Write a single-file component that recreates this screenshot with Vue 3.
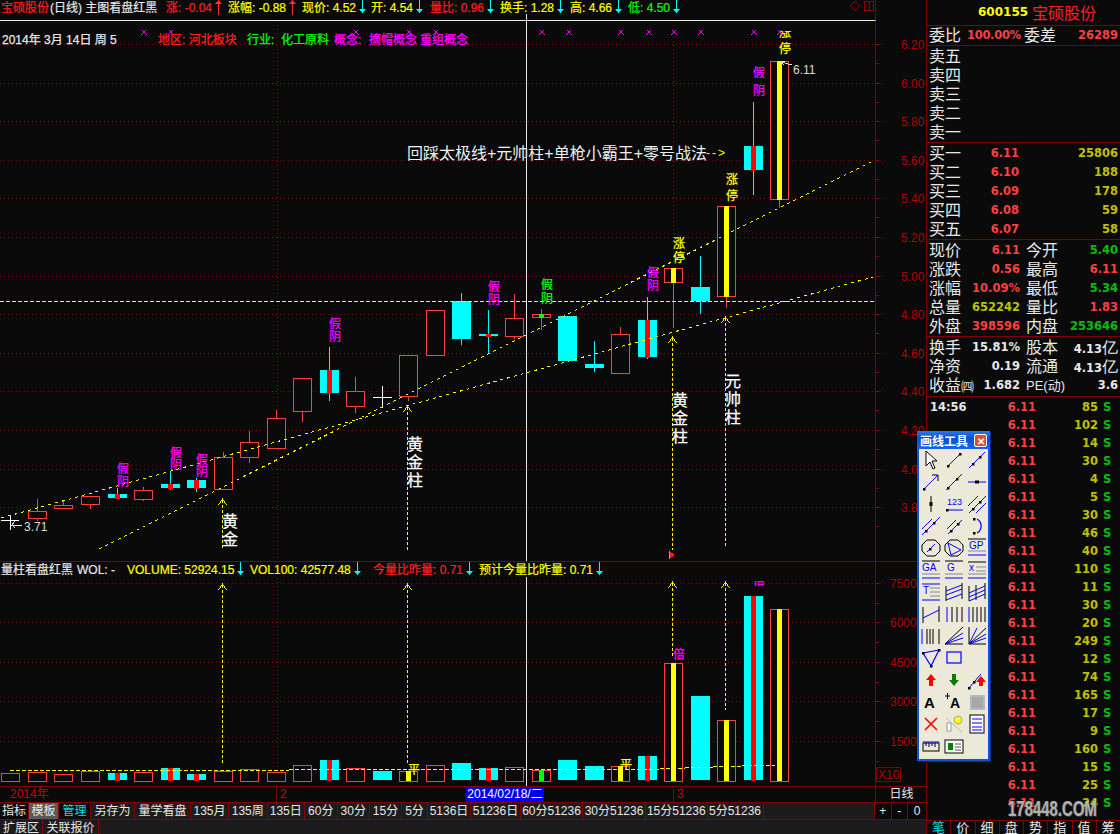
<script setup>
const quotes = [
  { text: '宝硕股份', color: 'red', w: 50 },
  { text: '(日线) 主图看盘红黑', color: 'white', w: 116 },
  { text: '涨: -0.04', color: 'red', w: 62, arrow: 'up' },
  { text: '涨幅: -0.88', color: 'yellow', w: 74, arrow: 'up' },
  { text: '现价: 4.52', color: 'yellow', w: 69, arrow: 'down' },
  { text: '开: 4.54', color: 'yellow', w: 59, arrow: 'down' },
  { text: '量比: 0.96', color: 'red', w: 70, arrow: 'down' },
  { text: '换手: 1.28', color: 'yellow', w: 70, arrow: 'down' },
  { text: '高: 4.66', color: 'yellow', w: 58, arrow: 'down' },
  { text: '低: 4.50', color: 'green', w: 54, arrow: 'down' },
]

const volQuotes = [
  { text: '量柱看盘红黑', color: 'white', w: 77 },
  { text: 'WOL: -', color: 'white', w: 50 },
  { text: 'VOLUME: 52924.15', color: 'yellow', w: 123, arrow: 'down' },
  { text: 'VOL100: 42577.48', color: 'yellow', w: 123, arrow: 'down' },
  { text: '今量比昨量: 0.71', color: 'red', w: 106, arrow: 'down' },
  { text: '预计今量比昨量: 0.71', color: 'yellow', w: 125, arrow: 'down' },
]

const priceTicks = [
  ['6.20', 44], ['6.00', 83], ['5.80', 121], ['5.60', 160], ['5.40', 198], ['5.20', 237], ['5.00', 276],
  ['4.80', 314], ['4.60', 353], ['4.40', 391], ['4.20', 430], ['4.00', 469], ['3.80', 507],
]
const volTicks = [['7500', 583], ['6000', 622], ['4500', 662], ['3000', 701], ['1500', 741]]

// left, body top, body bottom, wick top, wick bottom, kind, core colour
const candles = [
  [28, 511, 518, 499, 521, 'up'],
  [54, 505, 508, 500, 509, 'up'],
  [81, 496, 504, 496, 509, 'up'],
  [108, 494, 498, 488, 498, 'down', '#ff0000'],
  [134, 490, 499, 487, 501, 'up'],
  [161, 484, 488, 472, 490, 'down', '#ff0000'],
  [187, 480, 488, 478, 492, 'down', '#ff0000'],
  [214, 457, 489, 452, 489, 'up'],
  [240, 442, 457, 431, 463, 'up'],
  [267, 418, 448, 410, 449, 'up'],
  [293, 378, 411, 378, 422, 'up'],
  [320, 370, 393, 347, 401, 'down', '#ff0000'],
  [346, 391, 406, 377, 413, 'up'],
  [399, 355, 396, 355, 401, 'up'],
  [426, 310, 355, 310, 355, 'up'],
  [452, 301, 339, 293, 345, 'down'],
  [479, 334, 336, 310, 354, 'down', '#ff0000'],
  [505, 318, 336, 294, 339, 'up'],
  [532, 314, 317, 309, 330, 'up', '#00ff00'],
  [558, 316, 361, 316, 361, 'down'],
  [585, 364, 368, 341, 372, 'down'],
  [611, 334, 373, 327, 374, 'up'],
  [638, 320, 357, 297, 359, 'down', '#ff0000'],
  [664, 268, 282, 268, 328, 'up', '#ffff00'],
  [691, 287, 301, 256, 314, 'down'],
  [717, 206, 296, 206, 308, 'up', '#ffff00'],
  [744, 146, 170, 102, 195, 'down', '#ff0000'],
  [770, 61, 199, 61, 208, 'up', '#ffff00'],
]

// left, top, kind, core colour
const volumes = [
  [1, 773, 'up'], [28, 772, 'up'], [54, 774, 'up'], [81, 771, 'up'], [108, 773, 'down', '#ff0000'],
  [134, 772, 'up'], [161, 768, 'down', '#ff0000'], [187, 774, 'down', '#ff0000'], [214, 771, 'up'], [240, 769, 'up'],
  [267, 772, 'up'], [293, 765, 'up'], [320, 760, 'down', '#ff0000'], [346, 768, 'up'], [373, 771, 'down'],
  [399, 771, 'up', '#ffff00'], [426, 765, 'up'], [452, 763, 'down'], [479, 768, 'down', '#ff0000'], [505, 767, 'up'],
  [532, 770, 'up', '#00ff00'], [558, 760, 'down'], [585, 766, 'down'], [611, 766, 'up', '#ffff00'],
  [638, 756, 'down', '#ff0000'], [664, 663, 'up', '#ffff00'], [691, 696, 'down'], [717, 720, 'up', '#ffff00'],
  [744, 596, 'down', '#ff0000'], [770, 609, 'up', '#ffff00'],
]

const crossMarks = [144, 171, 356, 409, 436, 542, 569, 621, 649, 674, 701, 754, 780]

// stacked words on the chart: x, top of first glyph, glyphs, colour, size, pitch
const stacks = [
  [117, 463, '假阴', '#ff00ff', 12, 13],
  [170, 447, '假阴', '#ff00ff', 12, 12],
  [196, 454, '假阴', '#ff00ff', 12, 12],
  [329, 318, '假阴', '#ff00ff', 12, 13],
  [488, 281, '假阴', '#ff00ff', 12, 13],
  [541, 279, '假阴', '#00ff00', 12, 14],
  [647, 267, '假阴', '#ff00ff', 12, 13],
  [673, 238, '涨停', '#ffff00', 12, 14],
  [726, 174, '涨停', '#ffff00', 12, 16],
  [753, 67, '假阴', '#ff00ff', 12, 18],
  [779, 43, '停', '#ffff00', 12, 0],
  [407, 436, '黄金柱', '#ffffff', 16, 18],
  [672, 392, '黄金柱', '#ffffff', 16, 18],
  [725, 373, '元帅柱', '#ffffff', 16, 18],
  [222, 513, '黄金', '#ffffff', 16, 18],
]

const chartArrows = [[222.5, 500, 550], [407.5, 407, 550], [672.5, 338, 550], [725.5, 318, 548]]
const volArrows = [[222.5, 585, 764], [407.5, 585, 765], [672.5, 583, 657], [725.5, 583, 710]]

const maSegments = [[10, 289, 770.5], [289, 660, 769.5], [660, 685, 768.5], [685, 713, 767.5], [713, 742, 766.5], [742, 775, 765.5]]

const toolbarTabs = [
  { t: '指标', w: 29, cls: 'dark' }, { t: '模板', w: 30, cls: 'on' }, { t: '管理', w: 32, cls: 'cyan' }, { t: '另存为', w: 44 },
  { t: '量学看盘', w: 56 }, { t: '135月', w: 38 }, { t: '135周', w: 38.5 }, { t: '135日', w: 37.5 }, { t: '60分', w: 32.5 },
  { t: '30分', w: 32.5 }, { t: '15分', w: 32 }, { t: '5分', w: 26 }, { t: '5136日', w: 43 }, { t: '51236日', w: 50 },
  { t: '60分51236', w: 62 }, { t: '30分51236', w: 63 }, { t: '15分51236', w: 61.5 }, { t: '5分51236', w: 56 },
]

const sells = ['卖五', '卖四', '卖三', '卖二', '卖一']
const buys = [
  ['买一', '6.11', '25806'], ['买二', '6.10', '188'], ['买三', '6.09', '178'], ['买四', '6.08', '59'], ['买五', '6.07', '58'],
]
const stats = [
  ['现价', '6.11', 'r', '今开', '5.40', 'g'],
  ['涨跌', '0.56', 'r', '最高', '6.11', 'r'],
  ['涨幅', '10.09%', 'r', '最低', '5.34', 'g'],
  ['总量', '652242', 'y', '量比', '1.83', 'r'],
  ['外盘', '398596', 'r', '内盘', '253646', 'g'],
]
const trades = [85, 102, 14, 30, 4, 5, 30, 46, 40, 110, 11, 30, 20, 249, 12, 74, 165, 17, 9, 160, 15, 25, 24]
const sideTabs = ['笔', '价', '细', '盘', '势', '指', '值', '筹']

// toolbox glyphs
const B = '#0000ff'
const K = '#000000'
const l = (a, b, c, d, s = B, w = 1) => `<line x1="${a}" y1="${b}" x2="${c}" y2="${d}" stroke="${s}" stroke-width="${w}"/>`
const dot = (x, y) => `<rect x="${x - 1}" y="${y - 1}" width="2.5" height="2.5" fill="#000"/>`
const txt = (x, y, s, size = 9, c = B, weight = 400) => `<text x="${x}" y="${y}" font-size="${size}" font-weight="${weight}" font-family="Liberation Sans, sans-serif" fill="${c}">${s}</text>`
const tools = [
  `<polygon points="5,1 5,16 9,12 12,19 14,18 11,11 16,11" fill="#fff" stroke="#000"/>`,
  l(4, 16, 16, 4) + dot(4, 16) + dot(16, 4),
  l(2, 18, 18, 2) + dot(6, 14) + dot(13, 7),
  l(3, 17, 17, 3) + dot(3, 17) + l(11, 3, 17, 3, K) + l(17, 3, 17, 9, K),
  l(2, 18, 18, 2) + dot(4, 16) + dot(13, 7),
  l(1, 10, 19, 10) + `<rect x="8" y="8.5" width="4" height="3" fill="#000"/>`,
  l(10, 2, 10, 18, K) + `<rect x="8.5" y="8" width="3" height="4" fill="#000"/>`,
  txt(3, 11, '123', 9) + l(3, 16, 19, 16) + dot(3, 16),
  l(1, 12, 11, 2) + l(2, 19, 19, 2) + l(9, 19, 19, 9) + dot(6, 15) + dot(13, 8),
  l(1, 19, 19, 1) + l(1, 13, 11, 3) + dot(5, 15) + dot(13, 7),
  l(4, 18, 18, 4) + l(3, 13, 12, 4) + dot(7, 15) + dot(14, 8),
  `<path d="M10 3 A8 8 0 0 1 10 17" fill="none" stroke="${B}" stroke-width="1.2"/>` + dot(7, 3) + dot(7, 17),
  `<polygon points="6,2 14,2 19,7 19,13 14,18 6,18 1,13 1,7" fill="none" stroke="#000"/>` + l(6, 14, 14, 6) + dot(9, 11),
  `<polygon points="6,2 14,2 19,7 19,13 14,18 6,18 1,13 1,7" fill="none" stroke="#000"/><polygon points="4,5 17,12 7,17" fill="none" stroke="${B}"/>`,
  l(1, 1, 19, 1, K) + txt(2, 11, 'GP', 10) + l(1, 13, 19, 13, '#888') + l(1, 17, 19, 17),
  l(1, 1, 19, 1, K) + txt(1, 11, 'GA', 10) + l(1, 14, 19, 14, '#888') + l(1, 18, 19, 18),
  l(1, 1, 19, 1, K) + txt(3, 11, 'G', 10) + l(1, 14, 19, 14, '#888') + l(1, 18, 19, 18),
  l(1, 2, 19, 2, K) + txt(2, 11, 'x', 10) + l(9, 7, 19, 7, '#888') + l(9, 11, 19, 11, '#888') + l(1, 14, 19, 14, '#888') + l(1, 18, 19, 18),
  l(1, 2, 19, 2, B) + txt(2, 12, 'T', 10) + l(9, 6, 19, 6, '#888') + l(9, 10, 19, 10, '#888') + l(9, 14, 19, 14, '#888') + l(1, 18, 19, 18),
  l(2, 4, 2, 19, K) + l(18, 1, 18, 17, K) + l(2, 9, 18, 3) + l(2, 13, 18, 7) + l(2, 18, 18, 12),
  l(2, 4, 2, 19, K) + l(9, 3, 9, 18, K) + l(18, 1, 18, 17, K) + l(2, 11, 18, 4) + l(2, 15, 18, 8) + l(2, 19, 18, 12),
  l(2, 3, 2, 19, K) + l(18, 2, 18, 18, K) + l(2, 14, 18, 6),
  l(3, 3, 3, 18) + l(8, 3, 8, 18, K) + l(13, 3, 13, 18, K) + l(18, 3, 18, 18, K),
  l(2, 3, 2, 18) + l(6, 3, 6, 18, K) + l(10, 3, 10, 18, K) + l(14, 3, 14, 18, K) + l(18, 3, 18, 18, K),
  l(1, 3, 1, 18) + l(6, 3, 6, 18, K) + l(9, 3, 9, 18, K) + l(12, 3, 12, 18, K) + l(18, 3, 18, 18, K),
  l(1, 18, 19, 1, K) + l(1, 18, 19, 7) + l(1, 18, 19, 12) + l(1, 18, 19, 18, K),
  l(2, 1, 2, 18, K) + l(2, 18, 19, 18, K) + l(2, 18, 19, 2, K) + l(2, 18, 19, 8) + l(2, 18, 19, 12) + l(2, 18, 10, 2),
  `<polygon points="2,5 18,2 10,18" fill="none" stroke="${B}" stroke-width="1.2"/>` + dot(2, 5) + dot(18, 2) + dot(10, 18),
  `<rect x="3" y="4" width="14" height="11" fill="none" stroke="${B}" stroke-width="1.2"/>`,
  '',
  `<polygon points="10,4 15,10 12,10 12,16 8,16 8,10 5,10" fill="#ff0000"/>`,
  `<polygon points="8,4 12,4 12,10 15,10 10,16 5,10 8,10" fill="#008000"/>`,
  l(2, 18, 14, 4) + dot(2, 18) + dot(7, 12) + `<polygon points="14,6 19,12 16,12 16,16 12,16 12,12 9,12" fill="#ff0000"/>`,
  txt(3, 16, 'A', 15, K, 700),
  txt(6, 16, 'A', 14, K, 700) + l(1, 4, 6, 4, K) + l(3.5, 1, 3.5, 7, K),
  `<rect x="4" y="4" width="13" height="13" fill="#a8a8a8" stroke="#b8b8b8" stroke-width="2"/>`,
  l(4, 4, 16, 16, '#ff0000', 1.6) + l(16, 4, 4, 16, '#ff0000', 1.6),
  `<circle cx="14" cy="6" r="4" fill="#ffff00" stroke="#aaa"/><rect x="3" y="9" width="4" height="8" fill="#fff" stroke="#999"/>` + l(2, 4, 18, 18, '#bbb'),
  `<rect x="3" y="1" width="14" height="18" fill="#fff" stroke="#000"/>` + l(5, 5, 15, 5) + l(5, 9, 15, 9) + l(5, 13, 15, 13) + l(5, 16, 15, 16),
  `<rect x="2" y="7" width="16" height="8" fill="#ece9d8" stroke="#000"/>` + l(5, 7, 5, 10, K) + l(8, 7, 8, 11, K) + l(11, 7, 11, 10, K) + l(14, 7, 14, 11, K) + l(2, 6, 18, 6),
  `<rect x="1" y="4" width="18" height="13" fill="#fff" stroke="#000"/><rect x="4" y="7" width="5" height="7" fill="#008000"/>` + l(11, 8, 17, 8, '#555') + l(11, 11, 17, 11, '#555') + l(11, 14, 17, 14, '#555'),
]
</script>

<template>
  <div class="app">
    <div class="main">
      <div class="quote-bar">
        <div v-for="q in quotes" :key="q.text" class="quote" :class="q.color" :style="{ width: q.w + 'px' }">
          <span>{{ q.text }}</span>
          <svg v-if="q.arrow" class="arrow" width="7" height="15" viewBox="0 0 7 15">
            <template v-if="q.arrow === 'up'">
              <line x1="3.5" y1="2" x2="3.5" y2="15" stroke="#ff3232" />
              <polygon points="3.5,0 7,4 0,4" fill="#ff3232" />
            </template>
            <template v-else>
              <line x1="3.5" y1="0" x2="3.5" y2="13" stroke="#00ffff" />
              <polygon points="0,9 7,9 3.5,13" fill="#00ffff" />
            </template>
          </svg>
        </div>
        <div class="corner">
          <svg width="24" height="13" viewBox="0 0 24 13">
            <polygon points="5,1 9.5,6 5,11 0.5,6" fill="none" stroke="#900000" />
            <rect x="14.5" y="1.5" width="9" height="9" fill="none" stroke="#900000" />
            <line x1="19.5" y1="1.5" x2="19.5" y2="10.5" stroke="#900000" />
          </svg>
        </div>
      </div>

      <div class="pane price-pane">
        <svg class="canvas" width="926" height="540" viewBox="0 21 926 540" shape-rendering="crispEdges">
          <defs>
            <clipPath id="top-clip"><rect x="770" y="31" width="30" height="10" /></clipPath>
          </defs>
          <g v-for="t in priceTicks" :key="t[0]">
            <line class="grid" x1="0" :y1="t[1] + 0.5" x2="875" :y2="t[1] + 0.5" />
            <line class="tick" x1="875" :y1="t[1] + 0.5" x2="881" :y2="t[1] + 0.5" />
            <line class="tick" x1="875" :y1="t[1] + 19.5" x2="879" :y2="t[1] + 19.5" />
            <text class="axis" x="901" :y="t[1] + 5">{{ t[0] }}</text>
          </g>
          <line class="grid" x1="277.5" y1="21" x2="277.5" y2="561" />
          <line class="grid" x1="673.5" y1="21" x2="673.5" y2="561" />
          <line class="axis-line" x1="875.5" y1="21" x2="875.5" y2="561" />

          <text class="info" x="2" y="44" fill="#e8e8e8" stroke="#e8e8e8">2014年 3月 14日 周 5</text>
          <text class="info" x="158" y="44" fill="#ff2020" stroke="#ff2020">地区: 河北板块</text>
          <text class="info" x="247" y="44" fill="#00ff00" stroke="#00ff00">行业:</text>
          <text class="info" x="281" y="44" fill="#00ff00" stroke="#00ff00">化工原料</text>
          <text class="info" x="334" y="44" fill="#ff00ff" stroke="#ff00ff">概念:</text>
          <text class="info" x="369" y="44" fill="#ff00ff" stroke="#ff00ff">摘帽概念</text>
          <text class="info" x="420" y="44" fill="#ff00ff" stroke="#ff00ff">重组概念</text>
          <g v-for="x in crossMarks" :key="x" class="mark">
            <line :x1="x - 2" y1="30" :x2="x + 3" y2="35" />
            <line :x1="x + 2" y1="30" :x2="x - 3" y2="35" />
          </g>

          <g v-for="c in candles" :key="c[0]">
            <line
              :x1="c[0] + 9.5" :y1="c[3]" :x2="c[0] + 9.5" :y2="c[4]"
              :stroke="c[5] === 'up' ? '#ff4040' : '#00ffff'"
            />
            <rect v-if="c[5] === 'down'" :x="c[0]" :y="c[1]" width="19" :height="c[2] - c[1]" fill="#00ffff" />
            <rect v-else :x="c[0] + 0.5" :y="c[1] + 0.5" width="18" :height="c[2] - c[1]" fill="#0a0a0a" stroke="#ff4040" />
            <rect v-if="c[6]" :x="c[0] + 7" :y="c[1]" width="5" :height="c[2] - c[1] + 1" :fill="c[6]" />
          </g>
          <line x1="373" y1="397.5" x2="392" y2="397.5" stroke="#fff" />
          <line x1="382.5" y1="386" x2="382.5" y2="408" stroke="#fff" />
          <line x1="1" y1="520.5" x2="19" y2="520.5" stroke="#fff" />
          <line x1="10.5" y1="515" x2="10.5" y2="530" stroke="#fff" />
          <path d="M15 521 L12 525 L22 525 M12 525 L15 528" fill="none" stroke="#ddd" />
          <text class="label" x="24" y="531" fill="#ddd">3.71</text>
          <path d="M781 62 L792 65 M781 62 L785 61 M781 62 L784 65" fill="none" stroke="#ddd" />
          <text class="label" x="793" y="74" fill="#ddd">6.11</text>

          <line class="dash" x1="0" y1="301.5" x2="875" y2="301.5" />
          <line class="dots" x1="1" y1="518" x2="873" y2="277" />
          <line class="dots" x1="99" y1="549" x2="875" y2="160" />

          <g v-for="a in chartArrows" :key="a[0]">
            <line class="dash thin" :x1="a[0]" :y1="a[1]" :x2="a[0]" :y2="a[2]" />
            <path :d="`M${a[0] - 4} ${a[1] + 5} L${a[0]} ${a[1] - 1} L${a[0] + 4} ${a[1] + 5}`" fill="none" stroke="#ffff00" />
          </g>

          <g v-for="s in stacks" :key="s[0] + s[2]">
            <text
              v-for="(ch, i) in s[2]" :key="i" class="stack" :x="s[0]" :y="s[1] + i * s[5] + s[4] - 2"
              :fill="s[3]" :stroke="s[3]" :font-size="s[4]"
            >{{ ch }}</text>
          </g>
          <text class="stack" x="779" y="37" fill="#ffff00" stroke="#ffff00" font-size="12" clip-path="url(#top-clip)">涨</text>

          <text class="note" x="407" y="159">回踩太极线+元帅柱+单枪小霸王+零号战法</text>
          <text class="note-end" x="706" y="157">--&gt;</text>
          <polygon points="669,551 675,555 669,559" fill="#ff2020" />
          <line x1="669.5" y1="551" x2="669.5" y2="559" stroke="#00e0e0" />
        </svg>
      </div>

      <div class="pane vol-pane">
        <svg class="canvas" width="926" height="224" viewBox="0 562 926 224" shape-rendering="crispEdges">
          <defs>
            <clipPath id="vol-clip"><rect x="745" y="581" width="30" height="12" /></clipPath>
          </defs>
          <g v-for="t in volTicks" :key="t[0]">
            <line class="grid" x1="0" :y1="t[1] + 0.5" x2="875" :y2="t[1] + 0.5" />
            <line class="tick" x1="875" :y1="t[1] + 0.5" x2="881" :y2="t[1] + 0.5" />
            <line class="tick" x1="875" :y1="t[1] + 20" x2="879" :y2="t[1] + 20" />
            <text class="axis" x="890" :y="t[1] + 5">{{ t[0] }}</text>
          </g>
          <line class="grid" x1="277.5" y1="578" x2="277.5" y2="786" />
          <line class="grid" x1="673.5" y1="578" x2="673.5" y2="786" />
          <line class="axis-line" x1="875.5" y1="562" x2="875.5" y2="786" />

          <g v-for="v in volumes" :key="v[0]">
            <rect v-if="v[2] === 'down'" :x="v[0]" :y="v[1]" width="19" :height="780 - v[1]" fill="#00ffff" />
            <rect v-else :x="v[0] + 0.5" :y="v[1] + 0.5" width="18" :height="780.5 - v[1]" fill="#0a0a0a" stroke="#ff4040" />
            <rect v-if="v[3]" :x="v[0] + 7" :y="v[1]" width="5" :height="781 - v[1]" :fill="v[3]" />
          </g>
          <line v-for="m in maSegments" :key="m[0]" class="dash" :x1="m[0]" :y1="m[2]" :x2="m[1]" :y2="m[2]" />
          <g v-for="a in volArrows" :key="a[0]">
            <line class="dash thin" :x1="a[0]" :y1="a[1]" :x2="a[0]" :y2="a[2]" />
            <path :d="`M${a[0] - 4} ${a[1] + 5} L${a[0]} ${a[1] - 1} L${a[0] + 4} ${a[1] + 5}`" fill="none" stroke="#ffff00" />
          </g>
          <text class="stack" x="673" y="659" fill="#ff00ff" stroke="#ff00ff" font-size="12">倍</text>
          <text class="stack" x="408" y="774" fill="#ffff00" stroke="#ffff00" font-size="12">平</text>
          <text class="stack" x="620" y="769" fill="#ffff00" stroke="#ffff00" font-size="12">平</text>
          <text class="stack" x="753" y="585" fill="#ff00ff" stroke="#ff00ff" font-size="12" clip-path="url(#vol-clip)">倍</text>
          <rect x="876.5" y="767.5" width="24" height="14" fill="none" stroke="#800000" />
          <text class="axis" x="878" y="779">X10</text>
        </svg>
        <div class="vol-head">
          <div v-for="q in volQuotes" :key="q.text" class="quote" :class="q.color" :style="{ width: q.w + 'px' }">
            <span>{{ q.text }}</span>
            <svg v-if="q.arrow" class="arrow" width="7" height="15" viewBox="0 0 7 15">
              <line x1="3.5" y1="0" x2="3.5" y2="13" stroke="#00ffff" />
              <polygon points="0,9 7,9 3.5,13" fill="#00ffff" />
            </svg>
          </div>
        </div>
      </div>

      <div class="date-row">
        <span class="date-a">2014年</span>
        <span class="date-b">2</span>
        <span class="date-c">2014/02/18/二</span>
        <span class="date-d">3</span>
        <span class="date-e">日线</span>
      </div>

      <div class="tab-row">
        <div
          v-for="t in toolbarTabs" :key="t.t" class="tab" :class="t.cls"
          :style="{ width: t.w + 'px' }"
        >{{ t.t }}</div>
        <div class="tab-fill"></div>
        <div class="tab zoom-btn wide">+</div>
        <div class="tab zoom-btn wide">-</div>
        <div class="tab zoom-btn last">0</div>
      </div>
      <div class="tab-row second">
        <div class="tab first">扩展区</div>
        <div class="tab next">关联报价</div>
      </div>

      <div class="crosshair upper"></div>
      <div class="crosshair lower"></div>
    </div>

    <div class="side">
      <div class="code-row">
        <span class="code">600155</span>
        <span class="name">宝硕股份</span>
      </div>
      <div class="ratio-row">
        <span class="lbl">委比</span>
        <span class="num r ratio-val">100.00%</span>
        <span class="lbl ratio-lbl">委差</span>
        <span class="num r ratio-end">26289</span>
      </div>
      <div class="block sells">
        <div v-for="s in sells" :key="s" class="book-row"><span class="lbl">{{ s }}</span></div>
      </div>
      <div class="block buys">
        <div v-for="b in buys" :key="b[0]" class="book-row">
          <span class="lbl">{{ b[0] }}</span>
          <span class="num r price">{{ b[1] }}</span>
          <span class="num y qty">{{ b[2] }}</span>
        </div>
      </div>
      <div class="block stats">
        <div v-for="s in stats" :key="s[0]" class="stat-row">
          <span class="lbl">{{ s[0] }}</span>
          <span class="num" :class="s[2]">{{ s[1] }}</span>
          <span class="lbl second-lbl">{{ s[3] }}</span>
          <span class="num" :class="s[5]">{{ s[4] }}</span>
        </div>
      </div>
      <div class="block extra">
        <div class="stat-row">
          <span class="lbl">换手</span><span class="num w">15.81%</span>
          <span class="lbl second-lbl">股本</span><span class="num w">4.13<i class="unit">亿</i></span>
        </div>
        <div class="stat-row">
          <span class="lbl">净资</span><span class="num w">0.19</span>
          <span class="lbl second-lbl">流通</span><span class="num w">4.13<i class="unit">亿</i></span>
        </div>
        <div class="stat-row">
          <span class="lbl">收益<i class="small">㈣</i></span><span class="num w">1.682</span>
          <span class="lbl second-lbl pe">PE(动)</span><span class="num w">3.6</span>
        </div>
      </div>
      <div class="trades">
        <div v-for="(t, i) in trades" :key="i" class="trade-row">
          <span class="num w time">{{ i === 0 ? '14:56' : '' }}</span>
          <span class="num r">6.11</span>
          <span class="num y">{{ t }}</span>
          <span class="num g flag">S</span>
        </div>
      </div>
      <div class="side-tabs">
        <div v-for="(t, i) in sideTabs" :key="t" class="side-tab" :class="{ cyan: i === 0 }">{{ t }}</div>
      </div>
    </div>

    <div class="toolbox">
      <div class="tool-title">
        <span>画线工具</span>
        <span class="tool-close">✕</span>
      </div>
      <div class="tool-grid">
        <svg v-for="(t, i) in tools" :key="i" width="20" height="20" viewBox="0 0 20 20" v-html="t"></svg>
      </div>
    </div>

    <div class="watermark">178448.COM</div>
  </div>
</template>

<style>
html,
body {
  margin: 0;
  background: #0a0a0a;
  overflow: hidden;
}
</style>

<style scoped>
.app {
  position: relative;
  display: flex;
  width: 1120px;
  height: 834px;
  overflow: hidden;
  background: #0a0a0a;
  font: 12px "Liberation Sans", "Noto Sans CJK SC", sans-serif;
  color: #e8e8e8;
}
.main {
  position: relative;
  width: 926px;
  flex: none;
  border-right: 1px solid #800000;
}
.quote-bar {
  display: flex;
  align-items: flex-start;
  width: 875px;
  height: 20px;
  border-bottom: 1px solid #f0f0f0;
  border-right: 1px solid #800000;
  white-space: nowrap;
}
.quote {
  display: flex;
  align-items: flex-start;
  flex: none;
  height: 16px;
  line-height: 16px;
  -webkit-text-stroke: 0.2px currentColor;
}
.quote:first-child {
  padding-left: 1px;
  box-sizing: border-box;
}
.arrow {
  margin-left: 3px;
  flex: none;
}
.red { color: #ff2020; }
.white { color: #e8e8e8; }
.yellow { color: #ffff00; }
.green { color: #00ff00; }
.corner {
  margin-left: auto;
  margin-right: 1px;
  display: flex;
}
.pane {
  position: relative;
}
.canvas {
  display: block;
}
.price-pane {
  height: 540px;
  border-bottom: 1px solid #800000;
}
.vol-pane {
  height: 224px;
  border-bottom: 1px solid #800000;
}
.vol-head {
  position: absolute;
  left: 0;
  top: 0;
  height: 16px;
  display: flex;
  white-space: nowrap;
}
.grid {
  stroke: #7a0000;
  stroke-dasharray: 1 3;
}
.tick,
.axis-line {
  stroke: #800000;
}
.axis {
  fill: #b00000;
  font-size: 12px;
}
.info,
.label {
  font-size: 12px;
}
.info,
.stack {
  stroke-width: 0.25px;
}
.mark line {
  stroke: #ff00ff;
}
.dash {
  stroke: #ffff00;
  stroke-dasharray: 4 2;
}
.dash.thin {
  stroke-dasharray: 3 2;
}
.dots {
  stroke: #ffff00;
  stroke-dasharray: 3 4;
}
.note {
  fill: #f0f0f0;
  font-size: 16px;
}
.note-end {
  fill: #ffff00;
  font-size: 12px;
  letter-spacing: 2px;
}
.date-row {
  position: relative;
  height: 15px;
  border-bottom: 1px solid #800000;
}
.date-row span {
  position: absolute;
  top: 0;
  line-height: 15px;
  color: #c80000;
}
.date-a { left: 10px; }
.date-b {
  left: 276px;
  padding-left: 3px;
  border-left: 1px solid #800000;
}
.date-c {
  left: 466px;
  width: 78px;
  text-align: center;
  color: #fff !important;
  background: #0000ee;
}
.date-d {
  left: 673px;
  padding-left: 3px;
  border-left: 1px solid #800000;
}
.date-e {
  left: 875px;
  width: 51px;
  text-align: center;
  color: #e8e8e8 !important;
  border-left: 1px solid #800000;
}
.tab-row {
  display: flex;
  height: 16px;
  background: #1c1c1c;
  border-bottom: 1px solid #800000;
}
.tab {
  flex: none;
  box-sizing: border-box;
  border-right: 1px solid #800000;
  line-height: 16px;
  text-align: center;
  color: #e8e8e8;
  white-space: nowrap;
}
.tab.dark { background: #0a0a0a; }
.tab.on { background: #5a5a5a; }
.tab.cyan { color: #00e0e0; background: #0a0a0a; }
.tab-fill {
  flex: 1;
  border-right: 1px solid #800000;
}
.zoom-btn {
  background: #0a0a0a;
}
.zoom-btn.wide { width: 16.5px; }
.zoom-btn.last { width: 18px; border-right: 0; }
.second {
  height: 14px;
  border-bottom: 0;
}
.tab.first { width: 43px; }
.tab.next { width: 56px; }
.crosshair {
  position: absolute;
  left: 526px;
  width: 1px;
  background: #e8e8e8;
}
.crosshair.upper {
  top: 14px;
  height: 547px;
}
.crosshair.lower {
  top: 577px;
  height: 209px;
}
.side {
  flex: 1;
  display: flex;
  flex-direction: column;
  min-width: 0;
  overflow: hidden;
}
.lbl {
  font-size: 16px;
  line-height: 21px;
  height: 19px;
  color: #e8e8e8;
  white-space: nowrap;
}
.num {
  font: 700 11.5px/21px "DejaVu Sans", sans-serif;
  height: 19px;
  text-align: right;
  white-space: nowrap;
}
.r { color: #ff4040; }
.y { color: #c0c000; }
.g { color: #00c000; }
.w { color: #e8e8e8; }
.code-row {
  height: 25px;
  border-bottom: 1px solid #800000;
  display: flex;
  align-items: center;
  padding-left: 51px;
  gap: 4px;
}
.code {
  font: 700 12px "DejaVu Sans", sans-serif;
  color: #ffff00;
}
.name {
  font-size: 16px;
  color: #ff2020;
}
.ratio-row {
  height: 19px;
  border-bottom: 1px solid #800000;
  display: flex;
  padding: 0 2px;
}
.ratio-row .lbl,
.ratio-row .num {
  line-height: 19px;
}
.ratio-val {
  margin-left: 6px;
  width: 53px;
  letter-spacing: -0.3px;
}
.ratio-lbl { margin-left: 4px; }
.ratio-end { flex: 1; }
.block {
  border-bottom: 1px solid #800000;
  padding: 0 2px;
}
.sells { height: 96px; }
.book-row {
  display: grid;
  grid-template-columns: 40px 50px 99px;
  height: 19px;
}
.buys { height: 96px; }
.stat-row {
  display: grid;
  grid-template-columns: 38px 53px 44px 54px;
  height: 19px;
}
.stats { height: 96px; }
.extra { height: 59px; }
.second-lbl { padding-left: 6px; }
.small { font-style: normal; font-size: 13px; }
.pe { font-size: 13px; }
.unit { font-style: normal; font-weight: 400; font-size: 16px; }
.trades {
  height: 423px;
  overflow: hidden;
  padding-left: 3px;
}
.trade-row {
  display: grid;
  grid-template-columns: 46px 60px 62px auto;
  height: 18px;
}
.trade-row .num {
  line-height: 20px;
  height: 18px;
}
.time { text-align: left; }
.flag { text-align: left; padding-left: 5px; }
.side-tabs {
  display: flex;
  height: 13px;
  border-top: 1px solid #800000;
  margin-top: 1px;
}
.side-tab {
  flex: none;
  width: 24.25px;
  box-sizing: border-box;
  border-right: 1px solid #800000;
  font-size: 13px;
  line-height: 13px;
  text-align: center;
  color: #e8e8e8;
}
.side-tab.cyan { color: #00e0e0; }
.toolbox {
  position: absolute;
  left: 917px;
  top: 431px;
  width: 73px;
  box-sizing: border-box;
  border: 2px solid #1450d8;
  border-top: 0;
  background: #ece9d8;
  box-shadow: 1px 1px 0 #0a2a90;
}
.tool-title {
  display: flex;
  align-items: center;
  justify-content: space-between;
  height: 18px;
  margin: 0 -2px;
  padding: 0 3px;
  background: linear-gradient(180deg, #2a78f0, #0a4fd0 40%, #1a62e8);
  color: #fff;
  font-weight: 700;
  font-size: 12px;
  white-space: nowrap;
}
.tool-close {
  width: 13px;
  height: 13px;
  line-height: 13px;
  text-align: center;
  font-size: 10px;
  background: #e05030;
  border: 1px solid #fff;
  box-sizing: border-box;
  border-radius: 2px;
}
.tool-grid {
  display: grid;
  grid-template-columns: repeat(3, 23px);
  grid-auto-rows: 22px;
  justify-items: center;
  align-items: center;
  height: 308px;
  padding-bottom: 2px;
}
.watermark {
  position: absolute;
  left: 1008px;
  top: 796px;
  font: 700 22px "Liberation Sans", sans-serif;
  color: rgba(215, 215, 215, 0.75);
  text-shadow: 1px 1px 0 rgba(60, 60, 60, 0.9), -1px 0 0 rgba(110, 110, 110, 0.7);
  transform: scaleX(0.68);
  transform-origin: left center;
  white-space: nowrap;
}
</style>
